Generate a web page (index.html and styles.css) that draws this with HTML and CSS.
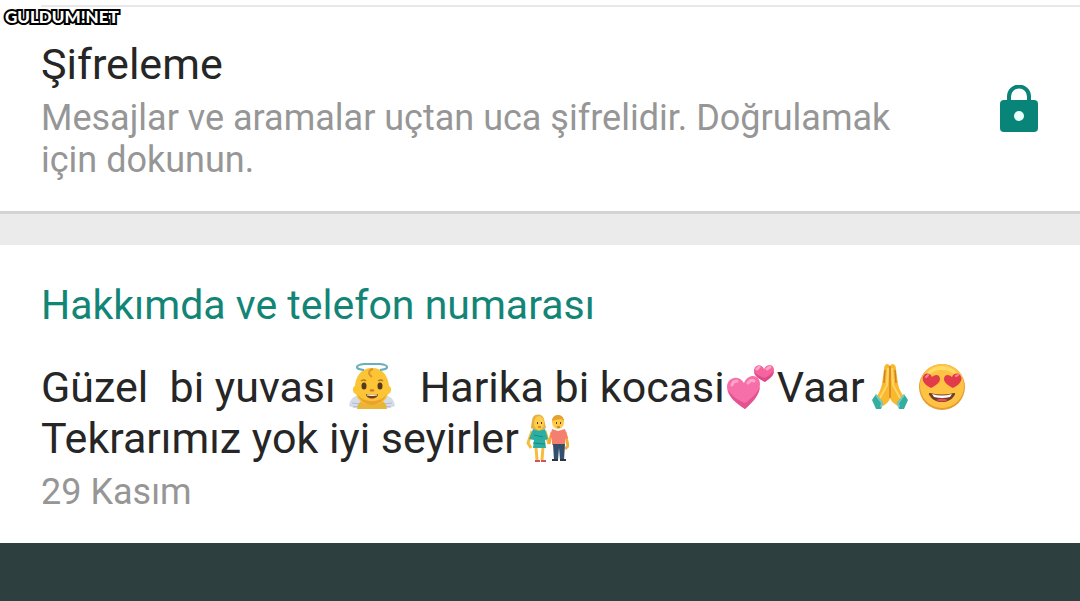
FILE: index.html
```html
<!DOCTYPE html>
<html lang="tr">
<head>
  <meta charset="UTF-8">
  <meta name="viewport" content="width=device-width, initial-scale=1.0">
  <title>Kişi bilgisi</title>
  <link rel="stylesheet" href="styles.css">
</head>
<body>

  <span class="watermark">GULDUM!NET</span>

  <!-- Encryption -->
  <section class="card encryption">
    <div class="encryption-row">
      <div class="encryption-text">
        <h2 class="title">Şifreleme</h2>
        <p class="description">Mesajlar ve aramalar uçtan uca şifrelidir. Doğrulamak için dokunun.</p>
      </div>
      <svg class="lock" viewBox="0 0 38 50" aria-hidden="true">
        <path d="M9 18V11.500a10 10 0 0 1 20 0V18" fill="none" stroke="#088578" stroke-width="4"/>
        <rect x="0" y="15" width="38" height="32" rx="4" fill="#088578"/>
        <circle cx="19" cy="31" r="5" fill="#e9fffc"/>
      </svg>
    </div>
  </section>

  <!-- About and phone number -->
  <section class="card about">
    <h2 class="heading">Hakkımda ve telefon numarası</h2>
    <p class="status">Güzel&nbsp; bi yuvası <svg class="emoji" viewBox="0 0 48 48" role="img" aria-label="melek">
        <path d="M1 43C2 36 6 32 13 33l3 12H7zM47 43c-1-7-5-11-12-10l-3 12h9z" fill="#d5dce8"/>
        <path d="M4 40l8 1M5 44l8-1M44 40l-8 1M43 44l-8-1" stroke="#aebccf"/>
        <path d="M9 46c1-8 6-10 15-10s14 2 15 10z" fill="#e9b536"/>
        <path d="M24 5C13 5 8 13 7 23c-3 1-3 7 1 8 2 7 8 11 16 11s14-4 16-11c4-1 4-7 1-8C40 13 35 5 24 5z" fill="#fbc536"/>
        <path d="M9 31c3 7 9 11 15 11s12-4 15-11c-4 5-9 7-15 7s-11-2-15-7z" fill="#eaa32c"/>
        <path d="M24 14c-4-3-4-7 1-8" fill="none" stroke="#dc9429" stroke-width="2"/>
        <path d="M16 7C6 6 7 2 16 1h16c9 1 10 5 0 6" fill="none" stroke="#69aebb" stroke-width="2"/>
        <path d="M13 18q3-2 5 0M30 18q3-2 5 0" fill="none" stroke="#b57822" stroke-width="1.500"/>
        <ellipse cx="16" cy="23" rx="2.500" ry="3.500" fill="#533a1d"/>
        <ellipse cx="32" cy="23" rx="2.500" ry="3.500" fill="#533a1d"/>
        <path d="M22 27q2 1 4 0" fill="none" stroke="#cc7b22" stroke-width="2"/>
        <path d="M18 31q6 2 12 0c0 6-12 6-12 0z" fill="#7d3b24"/>
        <path d="M19 32q5 1 10 0" fill="none" stroke="#fff" stroke-width="1"/>
      </svg>&nbsp; Harika bi kocasi<svg class="emoji" viewBox="0 0 48 48" role="img" aria-label="iki kalp">
        <path d="M18 46C9 40 0 33 0 24c0-10 12-13 17-4 4-10 16-9 16 1 0 10-8 18-15 25z" fill="#f76fa8"/>
        <path d="M18 46C9 40 2 34 1 27c5 7 11 11 17 13 6-4 11-9 15-16-1 9-8 16-15 22z" fill="#e4528f"/>
        <path d="M38 19c-6-3-12-7-11-12 1-6 8-6 10-1 3-6 10-5 10 1 0 5-5 9-9 12z" fill="#f5649e"/>
        <path d="M38 19c-5-3-10-5-11-10 3 3 7 5 11 6 3-2 6-4 9-7 0 5-5 8-9 11z" fill="#de4a89"/>
        <path d="M5 22q1-4 5-4M21 20q3-4 6-2M30 6l2-2M40 6l3-2" fill="none" stroke="#ffa4c8" stroke-width="3" stroke-linecap="round"/>
      </svg>Vaar<svg class="emoji" viewBox="-5 0 48 48" role="img" aria-label="dua eden eller">
        <path d="M19 3c-3-4-6-1-6 3l-2 15c-1 5-3 9-6 14l7 8c5-3 7-6 7-9 0 3 3 6 8 9l7-8c-4-5-6-9-7-14L25 6c0-4-3-7-6-3z" fill="#f9b82e"/>
        <path d="M19 3v32M14 7l-1 13M24 7l1 13" fill="none" stroke="#ce8425" stroke-width="1.500"/>
        <path d="M17 5l-1 17-7 13M21 5l1 17 7 13" fill="none" stroke="#ffd665" stroke-width="2"/>
        <path d="M5 31l7 9-2 6H5l-4-9z" fill="#35ada1"/>
        <path d="M33 31l-7 9 2 6h5l4-9z" fill="#35ada1"/>
        <path d="M5 32l6 8-1 4M33 32l-6 8 1 4" fill="none" stroke="#75ccc1" stroke-width="2"/>
      </svg><svg class="emoji" viewBox="0 0 48 48" role="img" aria-label="kalp gözlü gülen yüz">
        <circle cx="24" cy="24" r="23" fill="#e79b35"/>
        <circle cx="24" cy="23" r="22" fill="#ffc344"/>
        <path d="M5 20C7 8 15 3 24 3s17 5 19 17C37 9 31 7 24 7S11 9 5 20z" fill="#ffda65"/>
        <path d="M13 25C7 22 2 17 6 12c3-3 7-1 8 2 3-3 8-3 8 2 0 4-5 7-9 9z" fill="#e23b49"/>
        <path d="M35 25c6-3 11-8 7-13-3-3-7-1-8 2-3-3-8-3-8 2 0 4 5 7 9 9z" fill="#e23b49"/>
        <path d="M8 14l2-2M38 13l2-1" stroke="#ff8490" stroke-width="2" stroke-linecap="round"/>
        <path d="M12 30q12 3 24 0c2 0 1 2 0 3-5 8-19 8-24 0-1-1-2-3 0-3z" fill="#733b29"/>
        <path d="M14 31q10 3 20 0l-2 3q-8 2-16 0z" fill="#fff"/>
        <path d="M18 37q6-3 12 0-6 3-12 0z" fill="#e4515b"/>
      </svg><br>Tekrarımız yok iyi seyirler<svg class="emoji" viewBox="-4 0 48 48" role="img" aria-label="el ele tutuşan çift">
        <path d="M11 33l1 13M18 33l-1 13M7 17L3 29l3 5M20 17l4 13" fill="none" stroke="#f6bd3d" stroke-width="3"/>
        <path d="M6 14c0-1 1-9 2-11 3-4 10-3 11 2l2 9-7 4z" fill="#e5b03f"/>
        <ellipse cx="14" cy="9" rx="5" ry="7" fill="#ffcd4a"/>
        <path d="M8 15l6 2 6-2 3 10-3 1 1 8H8l1-8-5-1z" fill="#2daea2"/>
        <path d="M9 21l9 2M8 29l12 1" stroke="#158c87"/>
        <path d="M10 47h5M16 47h5" stroke="#d4535b" stroke-width="2"/>
        <path d="M27 18l-3 12M40 18l3 14-3 3" fill="none" stroke="#f2ad39" stroke-width="3"/>
        <ellipse cx="33" cy="8" rx="6" ry="7" fill="#ffca45"/>
        <path d="M27 7c0-8 12-8 12 0l-3-2-6 1z" fill="#e5a233"/>
        <path d="M27 15l6 2 7-2 3 9-3 1v6H27v-7l-2-1z" fill="#f47f70"/>
        <path d="M28 30h12l-1 16h-4l-1-12-1 12h-4z" fill="#344f6b"/>
        <path d="M27 46h6M35 46h6" stroke="#293640" stroke-width="2"/>
        <path d="M12 9h1M16 9h1M31 9h1M35 9h1" stroke="#5c3a1d" stroke-width="2"/>
        <path d="M13 13h3M32 13h3" stroke="#a95426"/>
      </svg></p>
    <p class="date">29 Kasım</p>
  </section>

</body>
</html>
```

FILE: styles.css
```css
* {
  box-sizing: border-box;
}

body {
  margin: 0;
  background-color: #2d403f;
  font-family: Roboto, "Noto Sans", sans-serif;
  color: #262626;
}

h2,
p {
  margin: 0;
  font-weight: normal;
}

.watermark {
  position: absolute;
  top: 7px;
  left: 5px;
  font-family: Lato, sans-serif;
  font-size: 17px;
  line-height: 20px;
  font-weight: 900;
  color: #ffffff;
  -webkit-text-stroke: 4px #000000;
  paint-order: stroke fill;
}

.card {
  background-color: #ffffff;
}

.encryption {
  padding-top: 5px;
  border-bottom: 3px solid #d4d4d4;
}

.encryption-row {
  display: flex;
  align-items: center;
  justify-content: space-between;
  margin-left: 41px;
  padding: 32px 42px 30px 0;
  border-top: 2px solid #e8e8e8;
}

.encryption-text {
  flex: 1;
  max-width: 880px;
}

.title {
  font-size: 43px;
  line-height: 50px;
}

.description {
  margin-top: 8px;
  font-size: 36px;
  line-height: 42px;
  color: #969696;
}

.lock {
  width: 38px;
  height: 50px;
  flex-shrink: 0;
}

.about {
  border-top: 31px solid #ebebeb;
  padding: 36px 41px 30px;
}

.heading {
  font-size: 41px;
  line-height: 48px;
  color: #128577;
}

.status {
  margin-top: 33px;
  font-size: 43px;
  line-height: 51px;
}

.emoji {
  width: 48px;
  height: 48px;
  margin: 0 2px;
  vertical-align: -9px;
}

.date {
  margin-top: 7px;
  font-size: 36px;
  line-height: 42px;
  color: #969696;
}
```
